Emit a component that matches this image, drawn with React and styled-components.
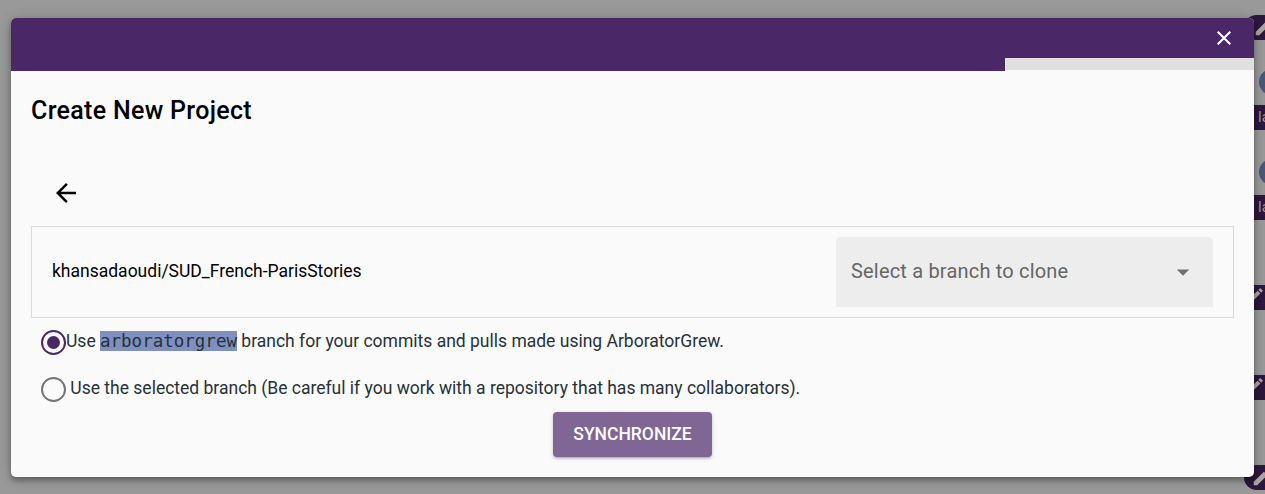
import React from 'react';
import styled, { createGlobalStyle } from 'styled-components';

const Global = createGlobalStyle`
  * { box-sizing: border-box; }
  body { margin: 0; overflow: hidden; background: #999; font-family: Roboto, sans-serif; font-size: 17.5px; line-height: 26.25px; }
`;

const Page = styled.div`
  position: relative;
  height: 494px;
  overflow: hidden;
  background: #999;
`;

const Backdrop = styled.div`
  display: flex;
  flex-direction: column;
  align-items: flex-end;
  gap: 65px;
  padding-top: 15px;
`;

const Tag = styled.div`
  display: flex;
  flex: none;
  align-items: center;
  width: 21px;
  height: 25px;
  padding-left: ${(p) => p.$indent}px;
  overflow: hidden;
  white-space: nowrap;
  background: #2d173d;
  border-radius: ${(p) => (p.$round ? '13px 0 0 13px' : '0')};
  color: #999;
  font-size: 15px;
  line-height: 23px;
  svg { flex: none; margin-top: ${(p) => p.$lift || 0}px; }
`;

const Avatar = styled.div`
  position: absolute;
  top: ${(p) => p.$top}px;
  right: -20px;
  width: 26px;
  height: 26px;
  border-radius: 50%;
  background: #4c5777;
`;

const Dialog = styled.section`
  position: absolute;
  top: 18px;
  left: 11px;
  width: 1243px;
  height: 459px;
  display: flex;
  flex-direction: column;
  overflow: hidden;
  border-radius: 5px;
  background: #fafafa;
  color: #000;
`;

const Shadow = styled.div`
  position: absolute;
  top: 18px;
  left: 11px;
  width: 1243px;
  height: 459px;
  border-radius: 5px;
  box-shadow: 0 2.5px 5px -1px rgba(0, 0, 0, 0.2), 0 5px 6px rgba(0, 0, 0, 0.14), 0 1px 12.5px rgba(0, 0, 0, 0.2);
`;

const Bar = styled.header`
  display: flex;
  flex: none;
  align-items: center;
  justify-content: flex-end;
  height: 40px;
  padding-right: 18.5px;
  background: #4a2767;
`;

const Track = styled.div`
  flex: none;
  height: 12px;
  background: #e0e0e0;
`;

const Fill = styled.div`
  width: 994.4px;
  height: 13px;
  background: #4a2767;
`;

const Title = styled.h1`
  margin: 21px 20px 0;
  font-size: 25px;
  font-weight: 500;
  line-height: 40px;
  letter-spacing: 0.3125px;
`;

const BackButton = styled.button`
  display: flex;
  align-items: center;
  justify-content: center;
  width: 52px;
  height: 52px;
  margin: 36px 0 0 29px;
  padding: 0;
  border: 0;
  background: none;
`;

const RepoCard = styled.div`
  display: flex;
  flex: none;
  align-items: center;
  justify-content: space-between;
  height: 92px;
  margin: 7px 20px 0;
  padding: 0 20px;
  border: 1px solid #dadada;
`;

const RepoName = styled.div`
  padding-bottom: 2px;
`;

const Select = styled.div`
  display: flex;
  align-items: center;
  justify-content: space-between;
  width: 377px;
  height: 70px;
  padding: 0 15px;
  border-radius: 5px 5px 0 0;
  background: #ededed;
  color: #666;
  font-size: 20px;
  letter-spacing: 0.1874px;
`;

const SelectLabel = styled.span`
  padding-bottom: 2px;
`;

const Options = styled.div`
  display: flex;
  flex-direction: column;
  padding-left: 30px;
`;

const Option = styled.label`
  display: flex;
  height: 47px;
  color: #263238;
  white-space: pre;
`;

const Radio = styled.span`
  display: flex;
  flex: none;
  align-items: center;
  justify-content: center;
  width: 25px;
  height: 25px;
  margin-top: 12px;
  border: 2px solid ${(p) => (p.$checked ? '#4a2767' : '#757575')};
  border-radius: 50%;
  &::after {
    content: '';
    width: 13px;
    height: 13px;
    border-radius: 50%;
    background: ${(p) => (p.$checked ? '#4a2767' : 'transparent')};
  }
`;

const OptionText = styled.span`
  margin-top: 10px;
`;

const Code = styled.code`
  background: #7f8fbf;
  font-family: 'DejaVu Sans Mono', monospace;
  font-size: 17.5px;
  line-height: 20px;
`;

const SyncButton = styled.button`
  align-self: center;
  flex: none;
  width: 159px;
  height: 45px;
  padding: 0 0 2px;
  border: 0;
  border-radius: 4px;
  background: #806694;
  color: #fff;
  font: 500 17.5px/30px Roboto, sans-serif;
  box-shadow: 0 1px 5px rgba(0, 0, 0, 0.14), 0 2px 2px rgba(0, 0, 0, 0.12), 0 3px 1px -2px rgba(0, 0, 0, 0.1);
`;

function Pencil({ size }) {
  return (
    <svg width={size} height={size} viewBox="0 0 24 24" fill="#aaa69f">
      <path d="M3 17.25V21h3.75L17.81 9.94l-3.75-3.75L3 17.25zM20.71 7.04a1 1 0 0 0 0-1.41l-2.34-2.34a1 1 0 0 0-1.41 0l-1.83 1.83 3.75 3.75 1.83-1.83z" />
    </svg>
  );
}

export default function App() {
  return (
    <Page>
      <Global />
      <Backdrop>
        <Tag $indent={9} $lift={-1} $round><Pencil size={22} /></Tag>
        <Tag $indent={14}>la</Tag>
        <Tag $indent={14}>la</Tag>
        <Tag $indent={3} $lift={-5}><Pencil size={18} /></Tag>
        <Tag $indent={3} $lift={-5}><Pencil size={18} /></Tag>
        <Tag $indent={7} $lift={-1} $round><Pencil size={22} /></Tag>
      </Backdrop>
      <Avatar $top={69} />
      <Avatar $top={159} />
      <Shadow />
      <Dialog>
        <Bar>
          <svg width="24" height="24" viewBox="0 0 24 24" fill="#fff">
            <path d="M19 6.41 17.59 5 12 10.59 6.41 5 5 6.41 10.59 12 5 17.59 6.41 19 12 13.41 17.59 19 19 17.59 13.41 12z" />
          </svg>
        </Bar>
        <Track><Fill /></Track>
        <Title>Create New Project</Title>
        <BackButton aria-label="Back">
          <svg width="30" height="30" viewBox="0 0 24 24" fill="#000">
            <path d="M20 11H7.83l5.59-5.59L12 4l-8 8 8 8 1.41-1.41L7.83 13H20v-2z" />
          </svg>
        </BackButton>
        <RepoCard>
          <RepoName>khansadaoudi/SUD_French-ParisStories</RepoName>
          <Select>
            <SelectLabel>Select a branch to clone</SelectLabel>
            <svg width="30" height="30" viewBox="0 0 24 24" fill="#707070">
              <path d="m7 10 5 5 5-5z" />
            </svg>
          </Select>
        </RepoCard>
        <Options>
          <Option>
            <Radio $checked />
            <OptionText>Use <Code>arboratorgrew</Code> branch for your commits and pulls made using ArboratorGrew.</OptionText>
          </Option>
          <Option>
            <Radio />
            <OptionText> Use the selected branch (Be careful if you work with a repository that has many collaborators).</OptionText>
          </Option>
        </Options>
        <SyncButton>SYNCHRONIZE</SyncButton>
      </Dialog>
    </Page>
  );
}
